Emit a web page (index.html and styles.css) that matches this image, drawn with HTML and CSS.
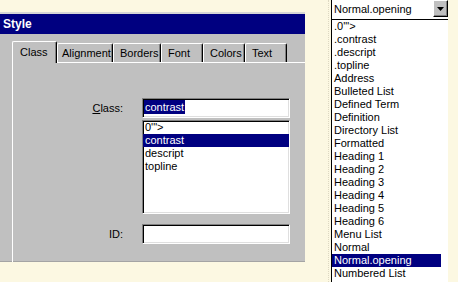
FILE: index.html
```html
<!DOCTYPE html>
<html lang="en">
<head>
    <meta charset="UTF-8">
    <meta name="viewport" content="width=device-width, initial-scale=1.0">
    <title>Style</title>
    <link rel="stylesheet" href="styles.css">
</head>
<body>
    <div class="screen">
        <section class="dialog">
            <header class="titlebar">Style</header>
            <div class="dialog-body">
                <nav class="tabs">
                    <span class="tab tab-class tab-active">Class</span>
                    <span class="tab tab-align">Alignment</span>
                    <span class="tab tab-borders">Borders</span>
                    <span class="tab tab-font">Font</span>
                    <span class="tab tab-colors">Colors</span>
                    <span class="tab tab-text">Text</span>
                </nav>
                <div class="panel">
                    <div class="form-grid">
                        <label class="field-label"><u>C</u>lass:</label>
                        <div class="textbox"><span class="sel">contrast</span></div>
                        <div class="listbox">
                            <div class="list-item">0'"&gt;</div>
                            <div class="list-item selected">contrast</div>
                            <div class="list-item">descript</div>
                            <div class="list-item">topline</div>
                        </div>
                        <label class="field-label id-row">ID:</label>
                        <div class="textbox id-row"></div>
                    </div>
                </div>
            </div>
        </section>

        <aside class="sidebar">
            <div class="picker">
                <div class="combo">
                    <span class="combo-value">Normal.opening</span>
                    <span class="combo-btn">
                        <svg width="7" height="4" viewBox="0 0 7 4"><polygon points="0,0 7,0 3.5,4" fill="#000"/></svg>
                    </span>
                </div>
                <ul class="dropdown">
                    <li>.0'"&gt;</li>
                    <li>.contrast</li>
                    <li>.descript</li>
                    <li>.topline</li>
                    <li>Address</li>
                    <li>Bulleted List</li>
                    <li>Defined Term</li>
                    <li>Definition</li>
                    <li>Directory List</li>
                    <li>Formatted</li>
                    <li>Heading 1</li>
                    <li>Heading 2</li>
                    <li>Heading 3</li>
                    <li>Heading 4</li>
                    <li>Heading 5</li>
                    <li>Heading 6</li>
                    <li>Menu List</li>
                    <li>Normal</li>
                    <li class="selected">Normal.opening</li>
                    <li>Numbered List</li>
                </ul>
            </div>
        </aside>
    </div>
</body>
</html>
```

FILE: styles.css
```css
* {
    margin: 0;
    padding: 0;
    box-sizing: border-box;
}

body {
    font-family: 'Liberation Sans', Arial, sans-serif;
    font-size: 11px;
    color: #000;
    background: #fcf8e2;
}

.screen {
    display: flex;
    width: 458px;
    height: 282px;
    overflow: hidden;
}

/* dialog */
.dialog {
    width: 305px;
    height: 250px;
    margin-top: 12px;
    background: #c0c0c0;
    border-top: 2px solid #d6d6d6;
    border-bottom: 1px solid #a4a4a4;
}

.titlebar {
    height: 20px;
    line-height: 20px;
    padding-left: 3px;
    background: #000080;
    color: #fff;
    font-size: 12px;
    font-weight: bold;
}

.dialog-body {
    padding: 7px 0 0 12px;
}

.tabs {
    display: flex;
    align-items: flex-end;
    height: 21px;
    position: relative;
    z-index: 1;
}

.tab {
    height: 19px;
    padding: 3px 0 0 6px;
    border-top: 1px solid #fff;
    border-left: 1px solid #fff;
    border-right: 1px solid #000;
    border-radius: 2px 2px 0 0;
    box-shadow: inset -1px 0 0 #808080;
    white-space: nowrap;
}

.tab-active {
    height: 22px;
    margin-bottom: -1px;
    padding: 4px 0 0 7px;
    background: #c0c0c0;
}

.tab-class { width: 45px; }
.tab-align { width: 56px; padding-left: 4px; }
.tab-borders { width: 48px; }
.tab-font { width: 42px; }
.tab-colors { width: 42px; }
.tab-text { width: 42px; }

.panel {
    height: 200px;
    padding-top: 35px;
    border-top: 1px solid #fff;
    border-left: 1px solid #fff;
}

.form-grid {
    display: grid;
    grid-template-columns: 112px 148px;
    grid-template-rows: 20px 94px auto;
    column-gap: 17px;
    row-gap: 2px;
}

.field-label {
    align-self: center;
    text-align: right;
    padding-right: 2px;
}

.textbox,
.listbox {
    grid-column: 2;
    background: #fff;
    border: 1px solid;
    border-color: #808080 #fff #fff #808080;
    box-shadow: inset 1px 1px 0 #000, inset -1px -1px 0 #dfdfdf;
}

.textbox {
    height: 20px;
    padding: 1px 0 0 1px;
}

.sel {
    display: inline-block;
    line-height: 14px;
    padding: 0 1px;
    background: #000080;
    color: #fff;
}

.list-item {
    height: 13px;
    line-height: 13px;
    padding-left: 2px;
}

.list-item.selected {
    background: #000080;
    color: #fff;
}

.id-row {
    margin-top: 8px;
}

/* style picker */
.sidebar {
    margin-left: 23px;
    padding-left: 2px;
    border-left: 1px dotted #ddd8c2;
}

.picker {
    width: 117px;
    height: 282px;
}

.combo {
    display: flex;
    height: 19px;
    background: #fff;
    border-left: 1px solid #000;
}

.combo-value {
    flex: 1;
    padding: 3px 0 0 2px;
}

.combo-btn {
    display: flex;
    align-items: center;
    justify-content: center;
    width: 15px;
    height: 17px;
    background: #c0c0c0;
    border: 1px solid;
    border-color: #fff #000 #000 #fff;
    box-shadow: inset -1px -1px 0 #808080;
}

.dropdown {
    list-style: none;
    height: 263px;
    background: #fff;
    border-top: 1px solid #000;
    border-left: 1px solid #000;
}

.dropdown li {
    height: 13px;
    line-height: 13px;
    padding-left: 2px;
    white-space: nowrap;
}

.dropdown .selected {
    margin-right: 7px;
    background: #000080;
    color: #fff;
}
```
